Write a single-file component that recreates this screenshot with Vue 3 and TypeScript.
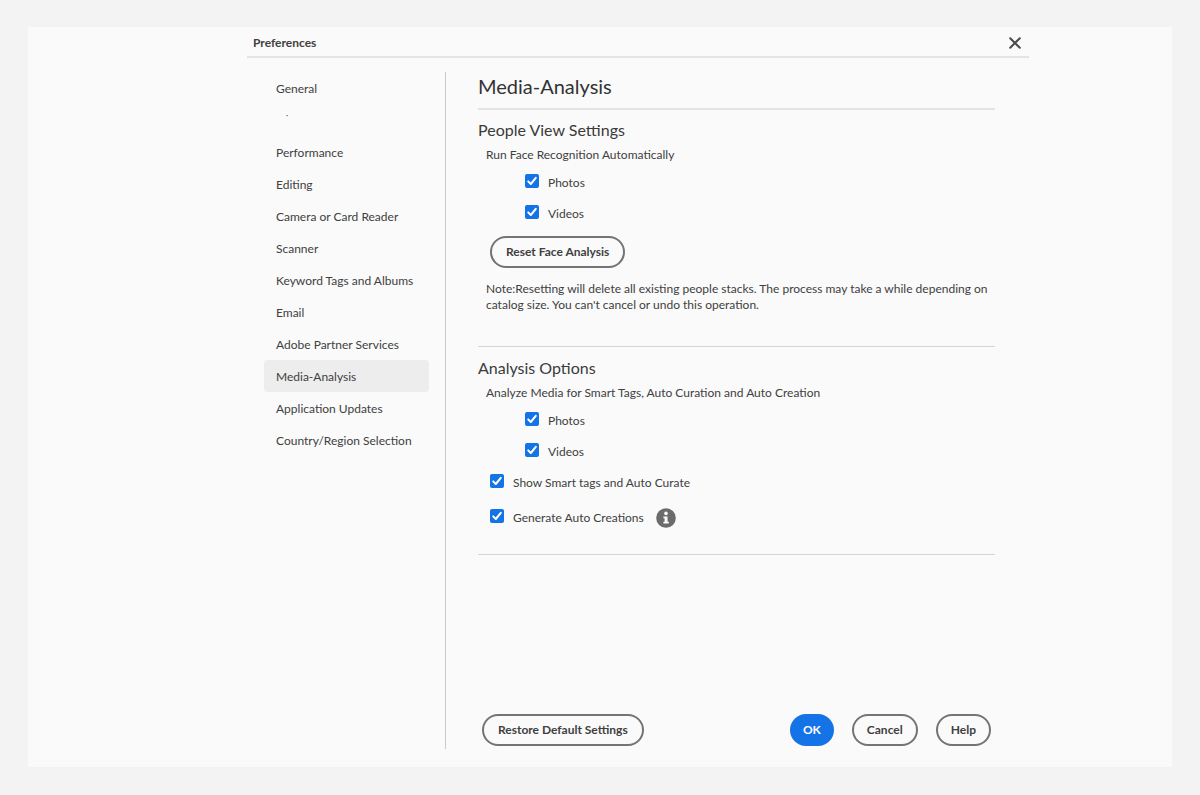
<script setup lang="ts">
import { reactive, ref } from 'vue'

const categories: string[] = [
  'General',
  '·',
  'Performance',
  'Editing',
  'Camera or Card Reader',
  'Scanner',
  'Keyword Tags and Albums',
  'Email',
  'Adobe Partner Services',
  'Media-Analysis',
  'Application Updates',
  'Country/Region Selection',
]

const selected = ref('Media-Analysis')

const options = reactive({
  facePhotos: true,
  faceVideos: true,
  analyzePhotos: true,
  analyzeVideos: true,
  smartTags: true,
  autoCreations: true,
})
</script>

<template>
  <div class="page">
    <div class="panel">
      <header class="titlebar">
        <span class="title">Preferences</span>
        <button class="close" type="button" aria-label="Close">
          <svg width="14" height="14" viewBox="0 0 14 14" aria-hidden="true">
            <path d="M2.2 2.2 11.8 11.8 M11.8 2.2 2.2 11.8" />
          </svg>
        </button>
      </header>

      <div class="body">
        <nav class="sidebar" aria-label="Preference categories">
          <button
            v-for="name in categories"
            :key="name"
            type="button"
            class="category"
            :class="{ active: name === selected, blank: name === '·' }"
            @click="selected = name"
          >
            {{ name }}
          </button>
        </nav>

        <main class="content">
          <h1>Media-Analysis</h1>

          <section class="group first">
            <h2>People View Settings</h2>
            <p class="lead">Run Face Recognition Automatically</p>
            <label class="check nested"><input v-model="options.facePhotos" type="checkbox" />Photos</label>
            <label class="check nested"><input v-model="options.faceVideos" type="checkbox" />Videos</label>
            <button class="pill wide reset" type="button">Reset Face Analysis</button>
            <p class="note">
              Note:Resetting will delete all existing people stacks. The process may take a while depending on
              catalog size. You can't cancel or undo this operation.
            </p>
          </section>

          <section class="group second">
            <h2>Analysis Options</h2>
            <p class="lead">Analyze Media for Smart Tags, Auto Curation and Auto Creation</p>
            <label class="check nested"><input v-model="options.analyzePhotos" type="checkbox" />Photos</label>
            <label class="check nested"><input v-model="options.analyzeVideos" type="checkbox" />Videos</label>
            <label class="check"><input v-model="options.smartTags" type="checkbox" />Show Smart tags and Auto Curate</label>
            <div class="info-row">
              <label class="check"><input v-model="options.autoCreations" type="checkbox" />Generate Auto Creations</label>
              <button class="info" type="button" aria-label="About auto creations">
                <svg width="20" height="20" viewBox="0 0 20 20" aria-hidden="true">
                  <circle cx="10" cy="10" r="9.8" fill="#6b6b6b" />
                  <circle cx="10" cy="5.4" r="1.8" fill="#fafafa" />
                  <path d="M7.4 8.4h4.1v5.4h1.3v1.8H7.4v-1.8h1.2v-3.6H7.4z" fill="#fafafa" />
                </svg>
              </button>
            </div>
          </section>

          <footer class="actions">
            <button class="pill wide restore" type="button">Restore Default Settings</button>
            <button class="pill primary" type="button">OK</button>
            <button class="pill" type="button">Cancel</button>
            <button class="pill" type="button">Help</button>
          </footer>
        </main>
      </div>
    </div>
  </div>
</template>

<style>
body {
  margin: 0;
  background: #f3f3f3;
}
</style>

<style scoped>
.page {
  box-sizing: border-box;
  min-height: 100vh;
  padding: 27px 28px 28px;
  display: flex;
  background: #f3f3f3;
  color: #404040;
  font-family: Lato, "Noto Sans", sans-serif;
  font-size: 12px;
  line-height: 16px;
}

button {
  font: inherit;
  color: inherit;
  cursor: pointer;
}

.panel {
  box-sizing: border-box;
  flex: 1;
  display: flex;
  flex-direction: column;
  padding: 0 143px 18px 219px;
  background: #fafafa;
}

.titlebar {
  display: flex;
  align-items: center;
  justify-content: space-between;
  height: 29px;
  padding: 0 7px 0 6px;
  border-bottom: 2px solid #e4e4e4;
}

.title {
  padding-top: 2px;
  font-weight: 700;
}

.close {
  display: flex;
  padding: 2px 0 0;
  border: 0;
  background: none;
}

.close path {
  fill: none;
  stroke: #4b4b4b;
  stroke-width: 2;
  stroke-linecap: round;
}

.body {
  flex: 1;
  display: flex;
  margin-top: 14px;
}

.sidebar {
  flex: none;
  display: flex;
  flex-direction: column;
  width: 165px;
  padding: 0 16px 0 17px;
  border-right: 1px solid #cacaca;
}

.category {
  height: 32px;
  padding: 1px 12px 0;
  border: 0;
  border-radius: 4px;
  background: none;
  text-align: left;
  white-space: nowrap;
}

.category.active {
  background: #ededed;
}

.category.blank {
  padding: 0 22px 10px;
  font-size: 8px;
}

.content {
  flex: 1;
  display: flex;
  flex-direction: column;
  min-width: 0;
  padding: 0 34px 3px 32px;
}

h1,
h2,
p {
  margin: 0;
}

h1 {
  padding-bottom: 8px;
  border-bottom: 2px solid #e4e4e4;
  color: #333;
  font-size: 20px;
  font-weight: 400;
  line-height: 28px;
}

.group {
  border-bottom: 1px solid #d4d4d4;
}

.first {
  padding: 8px 0 33px;
}

.second {
  padding: 9px 0 21px;
}

h2 {
  color: #3b3b3b;
  font-size: 16px;
  font-weight: 400;
  line-height: 24px;
}

.lead {
  padding: 1px 0 0 8px;
  line-height: 24px;
}

.check {
  display: flex;
  align-items: center;
  width: fit-content;
  height: 31px;
  padding-left: 12px;
}

.nested {
  padding-left: 47px;
}

.check input {
  appearance: none;
  width: 14px;
  height: 14px;
  margin: 0 9px 3px 0;
  border-radius: 2px;
  background: #1473e6 url("data:image/svg+xml,%3Csvg xmlns='http://www.w3.org/2000/svg' viewBox='0 0 14 14'%3E%3Cpath d='M3.2 7.4 5.8 10 10.8 3.8' fill='none' stroke='white' stroke-width='2' stroke-linecap='round' stroke-linejoin='round'/%3E%3C/svg%3E") center / 14px 14px;
}

.check input:not(:checked) {
  border: 2px solid #6e6e6e;
  background: #fff;
}

.info-row {
  display: flex;
  align-items: center;
  gap: 12px;
  margin-top: 4px;
}

.info {
  display: flex;
  padding: 0;
  border: 0;
  background: none;
}

.pill {
  box-sizing: border-box;
  height: 32px;
  padding: 0 13px;
  border: 2px solid #747474;
  border-radius: 16px;
  background: none;
  font-weight: 700;
  white-space: nowrap;
}

.wide {
  padding: 0 14px;
}

.primary {
  padding: 0 11px;
  border-color: #1473e6;
  background: #1473e6;
  color: #fff;
}

.reset {
  margin: 7px 0 0 12px;
}

.note {
  margin-top: 13px;
  padding-left: 8px;
}

.actions {
  display: flex;
  gap: 18px;
  margin-top: auto;
  padding: 0 4px;
}

.restore {
  margin-right: auto;
}
</style>
